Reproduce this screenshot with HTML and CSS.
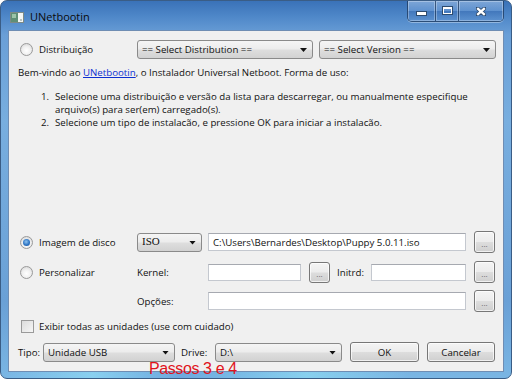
FILE: index.html
```html
<!DOCTYPE html>
<html lang="pt">
<head>
<meta charset="utf-8">
<title>UNetbootin</title>
<link rel="stylesheet" href="styles.css">
</head>
<body>
<div class="window">
  <div class="titlebar">
    <svg class="app-icon" width="14" height="11" viewBox="0 0 14 11">
      <rect x="0.5" y="0.5" width="13" height="10" fill="#f4f6f4" stroke="#7d8a86"/>
      <rect x="1" y="1" width="7" height="9" fill="#5f8f76"/>
      <rect x="2" y="2" width="4" height="4" fill="#9cc4a8"/>
      <rect x="10" y="7" width="2" height="2" fill="#b9c3c0"/>
    </svg>
    <span class="title">UNetbootin</span>
    <div class="caption-buttons">
      <div class="cb cb-min"><span class="g-min"></span></div>
      <div class="cb cb-max"><span class="g-max"></span></div>
      <div class="cb cb-close">
        <svg width="10" height="9" viewBox="0 0 10 9"><path d="M1 1 L9 8 M9 1 L1 8" stroke="#2c4a6e" stroke-width="4" stroke-linecap="round"/><path d="M1.2 1.2 L8.8 7.8 M8.8 1.2 L1.2 7.8" stroke="#fff" stroke-width="2.4"/></svg>
      </div>
    </div>
  </div>

  <div class="client">
    <div class="row row-dist">
      <div class="opt"><span class="radio"></span><span>Distribuição</span></div>
      <div class="combo w-dist">== Select Distribution ==</div>
      <div class="combo w-ver">== Select Version ==</div>
    </div>

    <p class="intro">Bem-vindo ao <a class="link">UNetbootin</a>, o Instalador Universal Netboot. Forma de uso:</p>

    <ol class="steps">
      <li><span class="num">1.</span><span>Selecione uma distribuição e versão da lista para descarregar, ou manualmente especifique<br>arquivo(s) para ser(em) carregado(s).</span></li>
      <li><span class="num">2.</span><span>Selecione um tipo de instalacão, e pressione OK para iniciar a instalacão.</span></li>
    </ol>

    <div class="spacer"></div>

    <div class="row row-a">
      <div class="opt"><span class="radio checked"></span><span>Imagem de disco</span></div>
      <div class="combo w-iso iso">ISO</div>
      <div class="field w-path">C:\Users\Bernardes\Desktop\Puppy 5.0.11.iso</div>
      <div class="btn dots">...</div>
    </div>

    <div class="row row-b">
      <div class="opt"><span class="radio"></span><span>Personalizar</span></div>
      <div class="lbl w-lbl">Kernel:</div>
      <div class="field w-kernel"></div>
      <div class="btn dots mid">...</div>
      <div class="lbl w-initrd">Initrd:</div>
      <div class="field w-initrd-f"></div>
      <div class="btn dots">...</div>
    </div>

    <div class="row row-c">
      <div class="opt"></div>
      <div class="lbl w-lbl">Opções:</div>
      <div class="field w-path">&nbsp;</div>
      <div class="btn dots">...</div>
    </div>

    <div class="row row-check">
      <span class="checkbox"></span><span>Exibir todas as unidades (use com cuidado)</span>
    </div>

    <div class="row row-bottom">
      <div class="lbl w-tipo">Tipo:</div>
      <div class="combo w-type">Unidade USB</div>
      <div class="lbl w-drive">Drive:</div>
      <div class="combo w-drv">D:\</div>
      <div class="btn push w-ok">OK</div>
      <div class="btn push w-cancel">Cancelar</div>
    </div>
  </div>

  <div class="annotation">Passos 3 e 4</div>
</div>
</body>
</html>
```

FILE: styles.css
```css
html, body {
  margin: 0;
  padding: 0;
}
body {
  width: 512px;
  height: 379px;
  overflow: hidden;
  background: #ffffff;
  font-family: "Open Sans", "Noto Sans", sans-serif;
  font-size: 9.7px;
  color: #111;
}

.window {
  position: relative;
  width: 512px;
  height: 379px;
  box-sizing: border-box;
  border: 1px solid #3a5d86;
  border-radius: 7px;
  padding: 0 7px 6px 7px;
  display: flex;
  flex-direction: column;
  background:
    linear-gradient(90deg, rgba(255,255,255,0) 0%, rgba(150,230,250,0.55) 18%, rgba(60,120,200,0.2) 35%, rgba(150,235,250,0.5) 60%, rgba(255,255,255,0) 80%) bottom / 100% 7px no-repeat,
    linear-gradient(180deg, #3a72b8 0px, #4f88c9 16px, #6a9fd7 34px, #78aedf 120px, #6aa0d6 300px, #7ab6e4 379px);
}

/* ---------- title bar ---------- */
.titlebar {
  height: 29px;
  display: flex;
  align-items: flex-start;
}
.app-icon {
  margin: 11px 0 0 2px;
  flex: 0 0 auto;
}
.title {
  margin: 9px 0 0 6px;
  font-size: 11px;
  line-height: 14px;
  color: #0b0b0b;
}
.caption-buttons {
  margin-left: auto;
  display: flex;
  height: 20px;
  border: 1px solid rgba(30, 55, 90, 0.75);
  border-top: none;
  border-radius: 0 0 5px 5px;
  overflow: hidden;
  box-shadow: 0 1px 0 rgba(255,255,255,0.35);
}
.cb {
  height: 20px;
  display: flex;
  align-items: center;
  justify-content: center;
  background: linear-gradient(180deg, rgba(170,200,235,0.6) 0%, rgba(120,165,220,0.5) 48%, rgba(60,110,180,0.45) 52%, rgba(100,150,210,0.5) 100%);
  box-shadow: inset 0 0 0 1px rgba(255,255,255,0.3);
}
.cb-min { width: 27px; border-right: 1px solid rgba(30,55,90,0.7); }
.cb-max { width: 22px; border-right: 1px solid rgba(30,55,90,0.7); }
.cb-close { width: 44px; }
.g-min {
  display: block;
  width: 9px;
  height: 3px;
  margin-top: 5px;
  background: #fff;
  border: 1px solid #2c4a6e;
}
.g-max {
  display: block;
  width: 7px;
  height: 4px;
  margin-top: -2px;
  border: 1px solid #fff;
  border-top-width: 2px;
  outline: 1px solid #2c4a6e;
  background: transparent;
}

/* ---------- client ---------- */
.client {
  flex: 1;
  box-sizing: border-box;
  background: #f0f0f0;
  border: 1px solid #6f8db3;
  padding: 9px 7px 9px 9px;
  display: flex;
  flex-direction: column;
  line-height: 13px;
}

.row {
  display: flex;
  align-items: center;
}
.opt {
  flex: 0 0 119px;
  display: flex;
  align-items: center;
}

.radio {
  width: 11px;
  height: 11px;
  border-radius: 50%;
  border: 1px solid #9a9a9a;
  background: radial-gradient(circle at 50% 60%, #ffffff 0%, #f1f1f1 45%, #cfcfcf 100%);
  box-sizing: content-box;
  position: relative;
  margin: 0 6px 0 2px;
  flex: 0 0 auto;
}
.radio.checked::after {
  content: "";
  position: absolute;
  left: 2px;
  top: 2px;
  width: 7px;
  height: 7px;
  border-radius: 50%;
  background: radial-gradient(circle at 45% 40%, #8fc3f0 0%, #2e75c4 55%, #1a4f96 100%);
}

.combo {
  position: relative;
  box-sizing: border-box;
  height: 19px;
  border: 1px solid #8a8a8a;
  border-radius: 3px;
  background: linear-gradient(180deg, #f5f5f5 0%, #ececec 48%, #dedede 52%, #d2d2d2 100%);
  padding: 2px 14px 0 4px;
  white-space: nowrap;
  overflow: hidden;
}
.combo::after {
  content: "";
  position: absolute;
  right: 5px;
  top: 7px;
  width: 7px;
  height: 4px;
  background: #111;
  clip-path: polygon(0 0, 100% 0, 50% 100%);
}
.w-dist { flex: 0 0 176px; margin-right: 6px; }
.w-ver { flex: 0 0 177px; }
.w-iso { flex: 0 0 65px; margin-right: 6px; }
.iso { font-family: "Liberation Serif", serif; font-size: 11px; padding-top: 1px; }
.w-type { flex: 0 0 132px; margin-right: 6px; }
.w-drv { flex: 0 0 127px; margin-right: 8px; }

.field {
  box-sizing: border-box;
  height: 18px;
  background: #fff;
  border: 1px solid #c4c8cf;
  border-top-color: #a6a9b0;
  padding: 2px 4px 0 4px;
  white-space: nowrap;
  overflow: hidden;
}
.w-path { flex: 0 0 258px; margin-right: 8px; }
.w-kernel { flex: 0 0 93px; margin-right: 8px; height: 17px; }
.w-initrd-f { flex: 0 0 95px; margin-right: 8px; height: 17px; }

.btn {
  box-sizing: border-box;
  border: 1px solid #777;
  border-radius: 3px;
  background: linear-gradient(180deg, #f4f4f4 0%, #ececec 48%, #dddddd 52%, #cfcfcf 100%);
  display: flex;
  align-items: center;
  justify-content: center;
  box-shadow: inset 0 0 0 1px rgba(255,255,255,0.7);
}
.dots {
  flex: 0 0 21px;
  height: 22px;
  font-size: 8px;
  color: #666;
  padding-top: 2px;
}
.dots.mid { height: 21px; margin-right: 7px; }
.push { height: 20px; }
.w-ok { flex: 0 0 69px; margin-right: 8px; }
.w-cancel { flex: 0 0 68px; }

.lbl { white-space: nowrap; }
.w-lbl { flex: 0 0 71px; }
.w-initrd { flex: 0 0 34px; }
.w-tipo { flex: 0 0 25px; }
.w-drive { flex: 0 0 34px; }

.row-dist { height: 19px; }
.intro { margin: 7px 0 0 0; }
.link { color: #0d2fd0; text-decoration: underline; }

.steps {
  list-style: none;
  margin: 11px 0 0 0;
  padding: 0;
}
.steps li {
  display: flex;
}
.num {
  flex: 0 0 37px;
  box-sizing: border-box;
  text-align: right;
  padding-right: 6px;
}

.spacer { flex: 1; }

.row-a { height: 22px; }
.row-b { height: 22px; margin-top: 8px; }
.row-c { height: 22px; margin-top: 7px; }
.row-check { height: 14px; margin-top: 7px; }
.row-bottom { height: 20px; margin-top: 9px; }

.checkbox {
  width: 11px;
  height: 11px;
  border: 1px solid #9a9a9a;
  background: linear-gradient(135deg, #dcdcdc 0%, #f6f6f6 100%);
  margin: 0 5px 0 3px;
  flex: 0 0 auto;
}

/* ---------- annotation overlay ---------- */
.annotation {
  position: absolute;
  left: 148px;
  top: 359px;
  font-family: "Liberation Sans", Arial, sans-serif;
  font-size: 16px;
  line-height: 18px;
  letter-spacing: -0.4px;
  color: #e0141c;
  white-space: nowrap;
}
```
